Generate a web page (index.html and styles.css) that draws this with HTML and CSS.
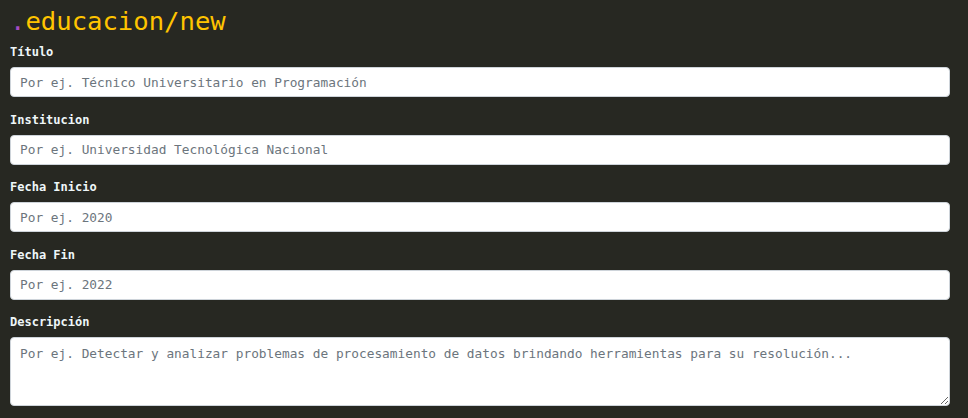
FILE: index.html
```html
<!DOCTYPE html>
<html lang="es">
<head>
<meta charset="utf-8">
<title>educacion/new</title>
<link rel="stylesheet" href="styles.css">
</head>
<body>
<main class="page">
  <h1 class="title"><span class="dot">.</span>educacion/new</h1>
  <form class="form">
    <div class="field">
      <label class="label" for="titulo">Título</label>
      <input class="control" id="titulo" type="text" placeholder="Por ej. Técnico Universitario en Programación">
    </div>
    <div class="field">
      <label class="label" for="inst">Institucion</label>
      <input class="control" id="inst" type="text" placeholder="Por ej. Universidad Tecnológica Nacional">
    </div>
    <div class="field">
      <label class="label" for="inicio">Fecha Inicio</label>
      <input class="control" id="inicio" type="text" placeholder="Por ej. 2020">
    </div>
    <div class="field">
      <label class="label" for="fin">Fecha Fin</label>
      <input class="control" id="fin" type="text" placeholder="Por ej. 2022">
    </div>
    <div class="field">
      <label class="label" for="desc">Descripción</label>
      <textarea class="control area" id="desc" placeholder="Por ej. Detectar y analizar problemas de procesamiento de datos brindando herramientas para su resolución..."></textarea>
    </div>
  </form>
</main>
</body>
</html>
```
FILE: styles.css
```css
html, body {
  margin: 0;
  background: #272822;
}
body {
  font-family: "DejaVu Sans Mono", "Liberation Mono", monospace;
  color: #f8f8f2;
}
.page {
  padding: 6px 18px 0 10px;
}
.title {
  margin: 0 0 7px 0;
  font-size: 25.6px;
  line-height: 30px;
  font-weight: normal;
  color: #ffc400;
}
.dot {
  color: #a64bc4;
}
.form {
  display: flex;
  flex-direction: column;
}
.field {
  display: flex;
  flex-direction: column;
  margin-bottom: 13.5px;
}
.label {
  font-size: 12px;
  line-height: 18px;
  font-weight: bold;
  color: #eef6f8;
  margin-bottom: 6px;
}
.control {
  box-sizing: border-box;
  width: 100%;
  height: 30px;
  margin: 0;
  padding: 0 9px;
  border: 1px solid #ced4da;
  border-radius: 4px;
  background: #fff;
  font-family: "DejaVu Sans Mono", "Liberation Mono", monospace;
  font-size: 12.8px;
  color: #495057;
  outline: none;
}
.control::placeholder {
  color: #6c757d;
}
.area {
  height: 69px;
  padding: 8px 9px;
  resize: vertical;
  line-height: 15px;
}
```
